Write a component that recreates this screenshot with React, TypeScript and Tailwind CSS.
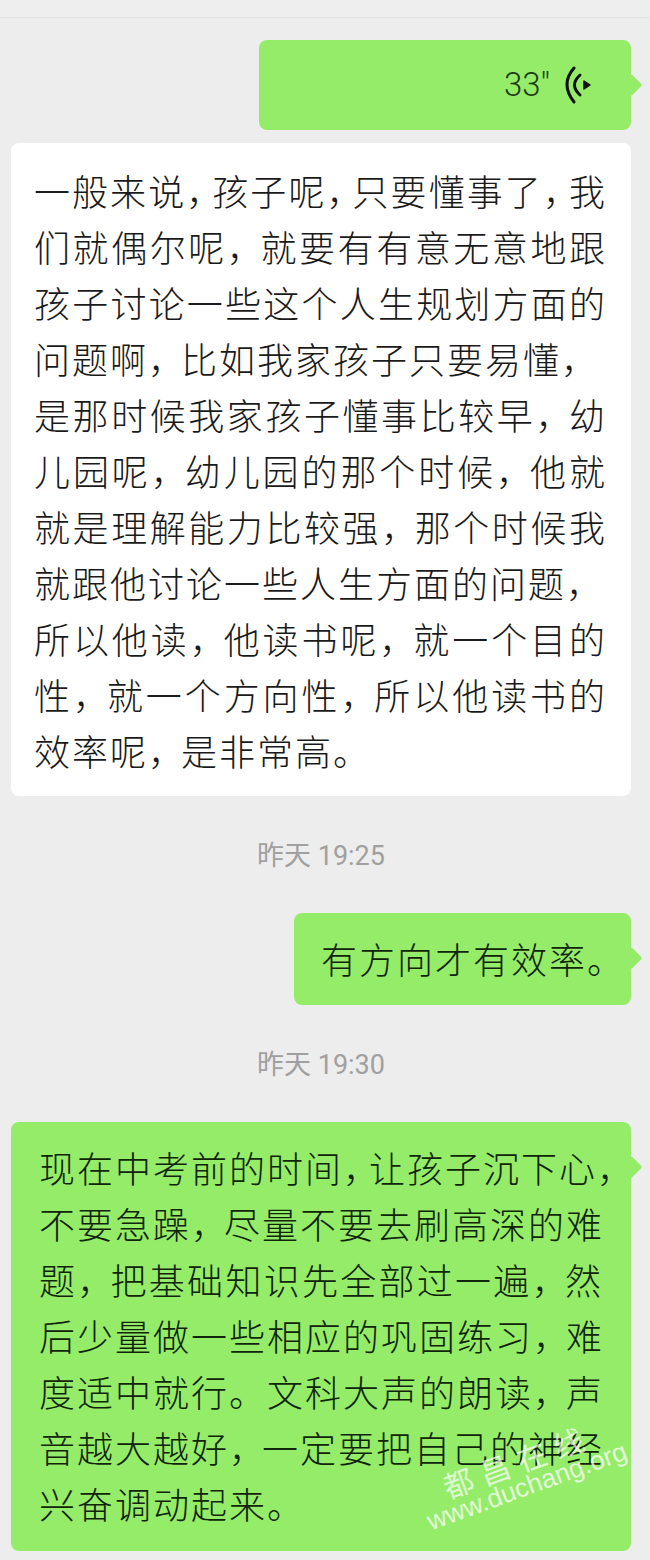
type Line = { text: string; fit?: boolean; tight?: boolean };

// fit: the line fills the bubble and gets justified, the rest keep natural spacing
const WHITE_LINES: Line[] = [
  { text: '一般来说，孩子呢，只要懂事了，我', fit: true, tight: true },
  { text: '们就偶尔呢，就要有有意无意地跟', fit: true },
  { text: '孩子讨论一些这个人生规划方面的', fit: true },
  { text: '问题啊，比如我家孩子只要易懂，' },
  { text: '是那时候我家孩子懂事比较早，幼', fit: true },
  { text: '儿园呢，幼儿园的那个时候，他就', fit: true },
  { text: '就是理解能力比较强，那个时候我', fit: true },
  { text: '就跟他讨论一些人生方面的问题，' },
  { text: '所以他读，他读书呢，就一个目的', fit: true },
  { text: '性，就一个方向性，所以他读书的', fit: true },
  { text: '效率呢，是非常高。' },
];

const GREEN_LINES: Line[] = [
  { text: '现在中考前的时间，让孩子沉下心，', tight: true },
  { text: '不要急躁，尽量不要去刷高深的难', fit: true },
  { text: '题，把基础知识先全部过一遍，然', fit: true },
  { text: '后少量做一些相应的巩固练习，难', fit: true },
  { text: '度适中就行。文科大声的朗读，声', fit: true },
  { text: '音越大越好，一定要把自己的神经', fit: true },
  { text: '兴奋调动起来。' },
];

function TextLine({ text, fit, tight }: Line) {
  const parts = text.split('，');
  return (
    <div className={`h-[56px] whitespace-nowrap text-[36px] leading-[56px] tracking-[2px] ${fit ? 'w-full [text-align-last:justify]' : ''}`}>
      {parts.map((part, i) => (
        <span key={i}>
          {part}
          {i < parts.length - 1 && (
            <span className={tight ? '-mr-[12px]' : '-mr-[5px]'}>，</span>
          )}
        </span>
      ))}
    </div>
  );
}

function Tail() {
  return <div className="absolute right-[-8px] top-[37px] h-[16px] w-[16px] rotate-45 rounded-[2px] bg-[#95ec69]" />;
}

function VoiceIcon() {
  return (
    <svg width="28" height="42" viewBox="0 0 28 42" fill="none" stroke="#111" strokeWidth="3" strokeLinecap="round">
      <path d="M10 4Q-4 20 10 38" />
      <path d="M16 11Q5 21 16 31" />
      <path d="M20 17L26 21L20 25Z" fill="#111" strokeWidth="1.5" strokeLinejoin="round" />
    </svg>
  );
}

function TimeLabel({ children }: { children: string }) {
  return (
    <div className="text-center font-['Roboto','Noto_Sans_CJK_SC',sans-serif] text-[27px] font-normal leading-[36px] text-[#a0a0a0]">
      {children}
    </div>
  );
}

export default function App() {
  return (
    <div className="relative h-[1560px] w-[650px] overflow-hidden bg-[#ededed] font-['Noto_Sans_CJK_SC',sans-serif] font-light text-[#1a1a1a]">
      <div className="h-[18px] border-b border-[#e5e5e5] bg-[#eeeeee]" />

      <div className="flex flex-col pl-[11px] pr-[19px] pt-[22px]">
        {/* voice message */}
        <div className="relative ml-auto flex h-[90px] w-[372px] items-center justify-end rounded-lg bg-[#95ec69] pr-[39px]">
          <span className="mr-[14px] font-['Roboto',sans-serif] text-[33px] font-light text-[#1d3a12]">33″</span>
          <VoiceIcon />
          <Tail />
        </div>

        {/* white reply */}
        <div className="mt-[13px] rounded-lg bg-white pb-[18px] pl-[23px] pr-[24px] pt-[19px]">
          {WHITE_LINES.map((line) => (
            <TextLine key={line.text} {...line} />
          ))}
        </div>

        <div className="mt-[42px]">
          <TimeLabel>昨天 19:25</TimeLabel>
        </div>

        <div className="relative ml-auto mt-[39px] flex h-[92px] w-[337px] items-center rounded-lg bg-[#95ec69] pb-[3px] pl-[27px] text-[#10240a]">
          <TextLine text="有方向才有效率。" />
          <Tail />
        </div>

        <div className="mt-[42px]">
          <TimeLabel>昨天 19:30</TimeLabel>
        </div>

        <div className="relative mt-[39px] rounded-lg bg-[#95ec69] pb-[20px] pl-[28px] pr-[28px] pt-[17px] text-[#10240a]">
          {GREEN_LINES.map((line) => (
            <TextLine key={line.text} {...line} />
          ))}
          <Tail />
        </div>
      </div>

      {/* watermark */}
      <div className="absolute left-[434px] top-[1503px] origin-bottom-left -rotate-[20deg] whitespace-nowrap font-['Liberation_Sans',sans-serif] text-[26.5px] font-normal leading-[36px] text-white/75">
        www.duchang.org
      </div>
      <div className="absolute left-[450px] top-[1468px] origin-bottom-left -rotate-[20deg] whitespace-nowrap text-[30px] font-normal leading-[36px] tracking-[9px] text-white/70">
        都昌在线
      </div>
    </div>
  );
}
